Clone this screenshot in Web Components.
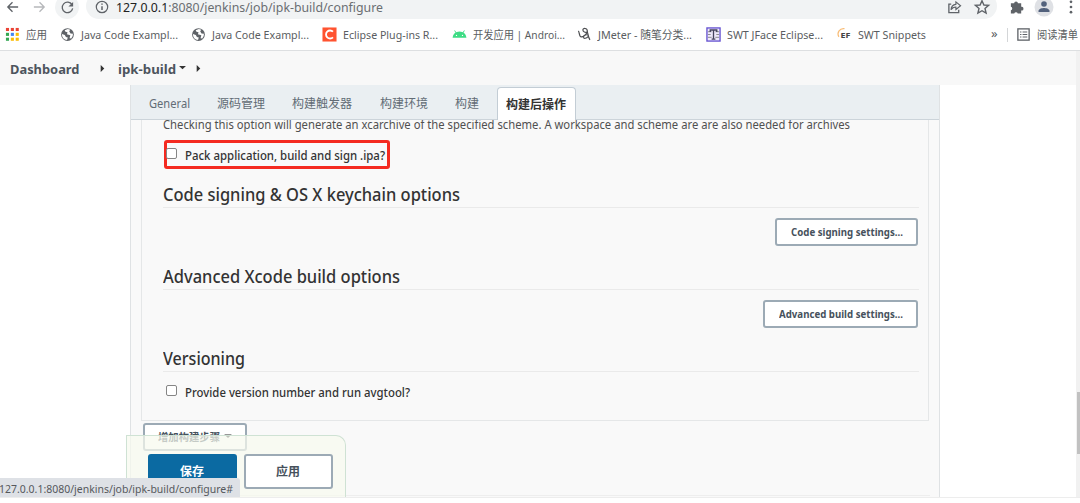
<!DOCTYPE html>
<html lang="zh-CN"><head><meta charset="utf-8"><title>ipk-build Config [Jenkins]</title>
<style>html,body{margin:0;height:100%;overflow:hidden;background:#fff}body{font-family:"Noto Sans","Noto Sans CJK SC",sans-serif;font-size:12px;color:#333}</style></head>
<body><app-window></app-window>
<script>
const define=(name,markup,setup)=>customElements.define(name,class extends HTMLElement{
  connectedCallback(){
    if(this.shadowRoot)return;
    this.attachShadow({mode:'open'}).innerHTML=markup;
    if(setup)setup.call(this,this.shadowRoot);
  }
});

/* Single-line label condensed or widened to a fixed measure. */
define('ui-text',`<style>:host{display:block;flex:none;white-space:nowrap;line-height:20px}span{display:inline-block;transform-origin:0 50%}</style><span><slot></slot></span>`,function(r){
  const w=+this.getAttribute('w'),s=r.querySelector('span');
  if(w){this.style.width=w+'px';s.style.transform='scaleX('+w/s.getBoundingClientRect().width+')'}
});

define('ui-icon',`<style>:host{display:block;flex:none;width:16px;height:16px;color:#5f6368}svg{display:block;width:100%;height:100%;overflow:visible}text{font-family:"Open Sans",sans-serif}</style><svg viewBox="0 0 16 16" fill="none" stroke="currentColor" stroke-width="1.4"></svg>`,function(r){
  const dots=['#ea4335','#ea4335','#ea4335','#34a853','#4285f4','#fbbc05','#34a853','#fbbc05','#fbbc05'];
  const icons={
    back:'<path d="M14 8H3M8 3 3 8l5 5"/>',
    forward:'<path d="M2 8h11M8 3l5 5-5 5"/>',
    reload:'<path d="M12.8 5A5.6 5.6 0 1 0 13.5 9"/><path d="M14 2v5H9z" fill="currentColor" stroke="none"/>',
    info:'<circle cx="8" cy="8" r="6.5"/><path d="M8 7v4.5M8 4v1.5" stroke-width="1.7"/>',
    apps:dots.map((c,i)=>`<rect x="${1+i%3*5.2}" y="${1+(i/3|0)*5.2}" width="3.3" height="3.3" fill="${c}" stroke="none"/>`).join(''),
    globe:'<circle cx="8" cy="8" r="6.8" fill="currentColor" stroke="none"/><path fill="#fff" stroke="none" d="M8.3 2.2 5 3.4 5.8 5 8 5.6 7.4 7.6 11 8.8 10.2 12l1.8.3a6 6 0 0 0 1.8-5L11.2 7 9.8 4.6 11 3zM2.1 7.4l3 1.1 1.2 2.2 2 .6-.8 2.5A6 6 0 0 1 2.1 8.5z"/>',
    c:'<path d="M.5.5h15v15H.5z" fill="#ff5330" stroke="none"/><path d="M11.7 5A4.3 4.3 0 1 0 11.7 11" stroke="#fff" stroke-width="2"/>',
    android:'<path d="M.6 11.5a7.4 6.8 0 0 1 14.8 0z" fill="#3ddc84" stroke="none"/><path d="m4.5 6.5-1.7-2.8M11.5 6.5l1.7-2.8" stroke="#3ddc84" stroke-width="1"/><circle cx="4.8" cy="9" r=".7" fill="#fff" stroke="none"/><circle cx="11.2" cy="9" r=".7" fill="#fff" stroke="none"/>',
    jmeter:'<path d="M1.2 4.5c1.800.3.6 5.600 3.400 6C7.300 10.800 11 7.200 11 4.200 11 1.200 6.200.600 6.300 3.100 6.400 5.400 9 6 10.700 5.400M11 5.200c1 2.600.800 5.600 2.800 8.600M11.400 8.500c-2.800-.800-5 .6-4.600 2.600.5 1.700 3.400.9 5-.8" stroke="#4b4d50" stroke-width="1.300"/>',
    swt:'<rect x="1" y="1" width="14" height="14" fill="#eee8fb" stroke="#6350d0"/><path d="M2 5h4M10 5h4M2 8h3M11 8h3M2 11h4M10 11h4" stroke="#888" stroke-width="1"/><path d="M4.500 5.300V3.200h7v2.100M8 3.200V13M6 13h4" stroke="#45435c" stroke-width="1.400"/>',
    ef:'<path d="M2 10.500A5.800 5.800 0 0 1 8 1.800" stroke="#f8bd78" stroke-width="1.300"/><text x="3.600" y="11.500" font-size="8" font-weight="700" fill="#444" stroke="none" textLength="10.600" lengthAdjust="spacingAndGlyphs">EF</text>',
    share:'<path d="M4.500 5H2v9h10.500v-3"/><path d="M9.500 5.200V2.500L14.500 6.700l-5 4V8C7 8 5.400 9 4.300 11c.2-3.300 2-5.400 5.200-5.800z" stroke-width="1.200"/>',
    star:'<path d="m8 1.700 1.900 4.300 4.700.4-3.600 3.100 1.100 4.600L8 11.700l-4.100 2.400L5 9.500 1.400 6.400l4.700-.4z"/>',
    puzzle:'<path fill="currentColor" stroke="none" d="M2 4h3.500a2 2 0 1 1 4 0H13v3.800a2 2 0 1 1 0 3.900V15H9.300a1.900 1.900 0 0 0-3.700 0H2v-3.600a1.900 1.900 0 0 0 0-3.700z"/>',
    user:'<circle cx="8" cy="8" r="9.500" fill="#dfe1e5" stroke="none"/><circle cx="8" cy="5" r="2.800" fill="#52617c" stroke="none"/><path d="M2.500 13v-1.200C3 9.600 6 9 8 9s5 .6 5.500 2.800V13z" fill="#52617c" stroke="none"/>',
    more:'<g fill="currentColor" stroke="none"><circle cx="8" cy="2.800" r="1.350"/><circle cx="8" cy="8" r="1.350"/><circle cx="8" cy="13.200" r="1.350"/></g>',
    list:'<rect x="2" y="2" width="12" height="12"/><path d="M4.300 5.300h1.500M7 5.300h5M4.300 8h1.500M7 8h5M4.300 10.700h1.500M7 10.700h5" stroke-width="1.200"/>',
    right:'<path d="M5.800 3.800 10.200 8l-4.400 4.200z" fill="currentColor" stroke="none"/>',
    down:'<path d="M3.800 5h8.400L8 9z" fill="currentColor" stroke="none"/>'
  };
  r.querySelector('svg').innerHTML=icons[this.getAttribute('name')];
});

define('browser-bar',`<style>
:host{display:block;height:19px;overflow:hidden;font-size:12.500px;color:#6a6e72}
.row{display:flex;align-items:center;height:28px;margin-top:-7px;position:relative}
.pill{display:flex;align-items:center;height:26px;width:911px;margin-left:7px;margin-top:-2px;border-radius:13px;background:#f1f3f4;box-sizing:border-box;padding-left:9px}
.pill ui-icon{margin-top:2px}
.url{line-height:14px;margin:3px 0 0 7px}
.reload{width:24px;height:24px;border-radius:50%;background:#f1f3f4;display:grid;place-items:center;margin-left:8px}
.reload ui-icon{width:15px;height:15px}b{font-weight:400;color:#222}
</style><div class="row"><ui-icon name="back" style="margin-left:5px;width:15px"></ui-icon><ui-icon name="forward" style="margin-left:12px;width:15px;color:#b6b8bb"></ui-icon><div class="reload"><ui-icon name="reload"></ui-icon></div>
<div class="pill"><ui-icon name="info" style="width:14px;height:14px"></ui-icon><ui-text class="url" w="267"><b>127.0.0.1</b>:8080/jenkins/job/ipk-build/configure</ui-text><ui-icon name="share" style="margin-left:564px;width:15px"></ui-icon><ui-icon name="star" style="margin-left:12px"></ui-icon></div>
<ui-icon name="puzzle" style="margin-left:12px;width:15px"></ui-icon><ui-icon name="user" style="margin-left:12px"></ui-icon><ui-icon name="more" style="margin-left:11px"></ui-icon></div>`);

define('book-mark',`<style>:host{display:flex;align-items:center;position:relative;gap:6px;flex:none}ui-icon{width:15px;height:15px}</style><ui-icon></ui-icon><ui-text></ui-text>`,function(r){
  const t=document.createElement('ui-text');t.setAttribute('w',this.getAttribute('w'));t.textContent=this.textContent;
  const i=document.createElement('ui-icon');i.setAttribute('name',this.getAttribute('icon'));
  r.querySelector('ui-icon').replaceWith(i);r.querySelector('ui-text').replaceWith(t);
});
define('bookmarks-bar',`<style>:host{display:flex;box-sizing:border-box;height:32px;border-bottom:1px solid #dddfe1;padding:0 1px 0 5px;align-items:center;font-size:11.500px;color:#5a5d61;overflow:hidden}.sep{height:14px;border-left:1px solid #d4d6d8;margin-left:9px}</style>
<book-mark icon="apps" w="21">应用</book-mark><book-mark icon="globe" w="97" style="margin-left:13px">Java Code Exampl...</book-mark><book-mark icon="globe" w="97" style="margin-left:13px">Java Code Exampl...</book-mark><book-mark icon="c" w="95" style="margin-left:13px">Eclipse Plug-ins R...</book-mark><book-mark icon="android" w="92" style="margin-left:14px">开发应用 | Androi...</book-mark><book-mark icon="jmeter" w="94" style="margin-left:12px">JMeter - 随笔分类...</book-mark><book-mark icon="swt" w="96" style="margin-left:14px">SWT JFace Eclipse...</book-mark><book-mark icon="ef" w="68" style="margin-left:14px">SWT Snippets</book-mark><ui-text style="margin-left:65px;font-size:13px;margin-top:-3px">»</ui-text><div class="sep"></div><book-mark icon="list" w="41" style="margin-left:8px">阅读清单</book-mark>`);

define('bread-crumbs',`<style>:host{display:flex;height:34px;background:#f8f8f8;align-items:center;padding-left:10px;font-size:13px;font-weight:700;color:#4d545d}ui-icon{width:13px;height:13px;color:#333}ui-text{margin-top:1px}</style>
<ui-text w="69.500">Dashboard</ui-text><ui-icon name="right" style="margin-left:16px"></ui-icon><ui-text w="58" style="margin-left:9px">ipk-build</ui-text><ui-icon name="down"></ui-icon><ui-icon name="right" style="margin-left:3px"></ui-icon>`);

define('config-tabs',`<style>:host{display:flex;height:35px;box-sizing:border-box;background:#eaeff2;border-bottom:1px solid #ccd4da;padding-left:18px;align-items:center;font-size:12px;color:#626c75;position:relative}
.active{box-sizing:border-box;height:33px;width:79px;margin-left:18px;align-self:flex-end;margin-bottom:-1px;background:#fff;border:1px solid #c3cdd5;border-bottom:0;border-radius:4px 4px 0 0;display:grid;place-items:center;font-weight:700;color:#333}ui-text{margin-top:3px}.active ui-text{margin:1px 1px 0 0}</style>
<ui-text w="41">General</ui-text><ui-text w="48" style="margin-left:27px">源码管理</ui-text><ui-text w="60" style="margin-left:27px">构建触发器</ui-text><ui-text w="48" style="margin-left:28px">构建环境</ui-text><ui-text w="24" style="margin-left:27px">构建</ui-text><div class="active"><ui-text w="60">构建后操作</ui-text></div>`);

define('ui-button',`<style>:host{display:flex;box-sizing:border-box;flex:none;align-items:center;justify-content:center;height:28px;border:2px solid #9caab5;border-radius:3px;background:#fff;color:#46515c;font-size:10.700px;font-weight:700}:host([primary]){background:#0b6aa2;border-color:#0b6aa2;color:#fff}</style><slot></slot>`);
define('ui-check',`<style>:host{display:flex;align-items:center;height:20px;padding-left:3px}i{box-sizing:border-box;width:11px;height:11px;border:1px solid #858585;border-radius:2px;background:#fff;margin:-2px 8px 0 0}</style><i></i><slot></slot>`);
define('section-title',`<style>:host{display:block;box-sizing:border-box;height:27px;border-bottom:1px solid #eaeaea;font-size:17.200px;font-weight:500;color:#333;padding-top:4px}</style><slot></slot>`);

define('build-steps',`<style>:host{display:flex;flex-direction:column;box-sizing:border-box;width:788px;height:301px;margin-left:10px;border:1px solid #e5e7e8;border-top:0;padding:0 10px 0 21px;overflow:hidden;font-size:11.700px}
ui-check{font-weight:500;color:#333}.hl{box-sizing:border-box;border:3px solid #f42a20;border-radius:3px;width:226px;height:29px;margin:6px 0 0 1px;display:flex;align-items:center}.hl ui-check{padding:0;margin-left:-1px}
section-title{width:756px}ui-button{align-self:flex-end}</style>
<ui-text w="687" style="margin-top:-6px;color:#505050">Checking this option will generate an xcarchive of the specified scheme. A workspace and scheme are are also needed for archives</ui-text>
<div class="hl"><ui-check><ui-text w="200">Pack application, build and sign .ipa?</ui-text></ui-check></div>
<section-title style="margin-top:12px"><ui-text w="297">Code signing &amp; OS X keychain options</ui-text></section-title>
<ui-button style="width:143px;margin-top:10px"><ui-text w="112">Code signing settings...</ui-text></ui-button>
<section-title style="margin-top:17px"><ui-text w="237">Advanced Xcode build options</ui-text></section-title>
<ui-button style="width:155px;margin-top:10px"><ui-text w="124">Advanced build settings...</ui-text></ui-button>
<section-title style="margin-top:17px"><ui-text w="82">Versioning</ui-text></section-title>
<ui-check style="margin-top:9px"><ui-text w="225" style="margin-top:2px">Provide version number and run avgtool?</ui-text></ui-check>`);

define('config-panel',`<style>:host{display:block;box-sizing:border-box;width:810px;height:412px;margin-left:130px;border:solid #dfe2e4;border-width:0 1px;background:#f9f9f9;overflow:hidden}.add{width:104px;margin:2px 0 0 12px;font-size:10.500px}.line{margin:44px 9px 0 11px;border-top:1px solid #eee}</style>
<config-tabs></config-tabs><build-steps></build-steps><ui-button class="add"><ui-text w="62" style="margin-left:2px">增加构建步骤</ui-text><ui-icon name="down" style="width:14px;margin-left:1px;color:#333"></ui-icon></ui-button><div class="line"></div>`);

define('save-bar',`<style>:host{position:absolute;left:126px;top:350px;width:220px;height:62px;box-sizing:border-box;border:1px solid #cfe2d4;border-bottom:0;border-radius:0 10px 0 0;background:rgba(246,249,238,.72);display:flex;align-items:flex-start;gap:7px;padding:18px 0 0 21px}ui-button{width:89px;height:35px;font-size:12px}ui-text{margin:1px 1px 0 0}</style>
<ui-button primary><ui-text w="24">保存</ui-text></ui-button><ui-button><ui-text w="24">应用</ui-text></ui-button>`);
define('status-tip',`<style>:host{position:absolute;left:0;bottom:0;width:240px;height:19px;background:#dee1e6;border-top-right-radius:3px;color:#55585c;font-size:11.500px;overflow:hidden}ui-text{margin-left:-1px;line-height:21px}</style><ui-text w="234">127.0.0.1:8080/jenkins/job/ipk-build/configure#</ui-text>`);
define('scroll-track',`<style>:host{position:absolute;right:0;top:-34px;width:4px;bottom:0;background:#f1f1f1}i{display:block;width:3px;height:62px;margin:341px 0 0 1px;background:#c1c1c1}</style><i></i>`);

define('app-window',`<style>:host{display:block;width:1080px;height:503px;overflow:hidden}main{position:relative;height:412px;border-bottom:1px solid #ededed}</style>
<browser-bar></browser-bar><bookmarks-bar></bookmarks-bar><bread-crumbs></bread-crumbs><main><config-panel></config-panel><save-bar></save-bar><status-tip></status-tip><scroll-track></scroll-track></main>`);
</script></body></html>
